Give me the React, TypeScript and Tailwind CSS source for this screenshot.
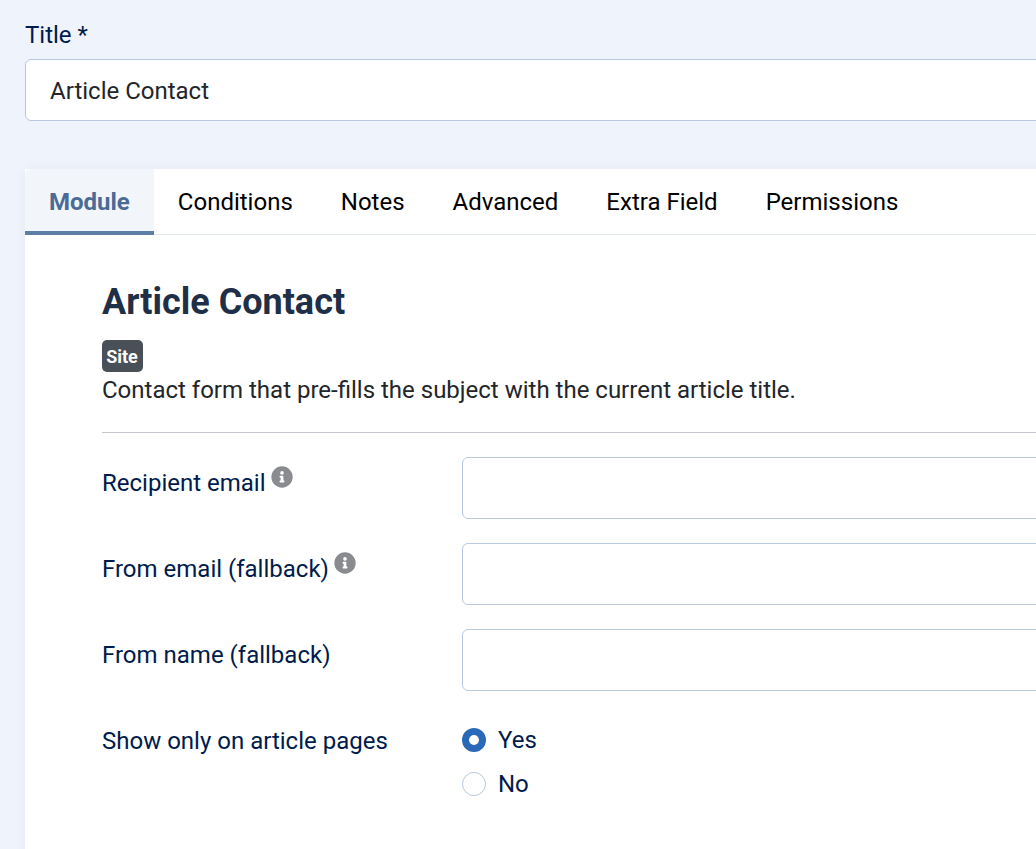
const tabs = ["Conditions", "Notes", "Advanced", "Extra Field", "Permissions"]

function InfoIcon() {
  return (
    <svg viewBox="0 0 512 512" className="h-[22px] w-[22px] fill-[#8a8b8f]">
      <path d="M256 8a248 248 0 1 0 0 496 248 248 0 0 0 0-496zm0 110a42 42 0 1 1 0 84 42 42 0 0 1 0-84zm56 254c0 7-5 12-12 12h-88c-7 0-12-5-12-12v-24c0-7 5-12 12-12h12v-64h-12c-7 0-12-5-12-12v-24c0-7 5-12 12-12h64c7 0 12 5 12 12v100h12c7 0 12 5 12 12v24z" />
    </svg>
  )
}

function Field({ label, info }: { label: string; info?: boolean }) {
  return (
    <div className="mb-[24px] flex">
      <div className="flex w-[360px] shrink-0 items-start pt-[8px] text-[24px] leading-[36px] text-[#001b4c]">
        <span>{label}</span>
        {info ? (
          <span className="ml-[5px] mt-[1px]">
            <InfoIcon />
          </span>
        ) : null}
      </div>
      <div className="h-[62px] flex-1 rounded-[6px] border border-[#b7c8e0] bg-white" />
    </div>
  )
}

export default function App() {
  return (
    <div className="h-[849px] w-[1036px] overflow-hidden bg-[#eff4fc] font-['Roboto',sans-serif]">
      <div className="w-[1300px] pl-[25px] pt-[17px]">
        <div className="text-[24px] leading-[36px] text-[#001b4c]">Title *</div>
        <div className="mt-[6px] flex h-[62px] items-center rounded-[6px] border border-[#b7c8e0] bg-white pl-[24px] pt-[2px] text-[24px] text-[#22262a]">
          Article Contact
        </div>

        <div className="mt-[48px] bg-white shadow-[0_0_12px_rgba(0,0,0,0.04)]">
          <div className="flex h-[66px] border-b border-[#dfe7f1] text-[24px] text-black">
            <div className="-mb-px flex h-[66px] items-center rounded-tl-[6px] border-b-[4px] border-[#5d7ea6] bg-[#f2f5f9] px-[24px] pt-[4px] font-bold text-[#4a6b96]">
              Module
            </div>
            {tabs.map((t) => (
              <div key={t} className="flex items-center px-[24px]">
                {t}
              </div>
            ))}
          </div>

          <div className="h-[700px] pl-[77px] pt-[42px]">
            <h1 className="text-[36px] font-bold leading-[50px] text-[#1f2f47]">Article Contact</h1>
            <div className="mt-[13px] flex h-[32px] w-[41px] items-center justify-center rounded-[5px] bg-[#495057] pr-[1px] text-[18px] font-bold text-white">
              Site
            </div>
            <p className="text-[24px] leading-[36px] text-[#22262a]">
              Contact form that pre-fills the subject with the current article title.
            </p>
            <div className="mb-[24px] mt-[24px] border-t border-[#c4c7cd]" />

            <Field label="Recipient email" info />
            <Field label="From email (fallback)" info />
            <Field label="From name (fallback)" />

            <div className="flex text-[24px] leading-[36px] text-[#001b4c]">
              <div className="w-[360px] shrink-0 pt-[8px]">Show only on article pages</div>
              <div className="pt-[7px]">
                <div className="flex h-[36px] items-center gap-[12px]">
                  <span className="h-[24px] w-[24px] rounded-full border-[7px] border-[#2a69b8] bg-white" />
                  Yes
                </div>
                <div className="mt-[8px] flex h-[36px] items-center gap-[12px]">
                  <span className="h-[24px] w-[24px] rounded-full border border-[#b7c8e0] bg-white" />
                  No
                </div>
              </div>
            </div>
          </div>
        </div>
      </div>
    </div>
  )
}
